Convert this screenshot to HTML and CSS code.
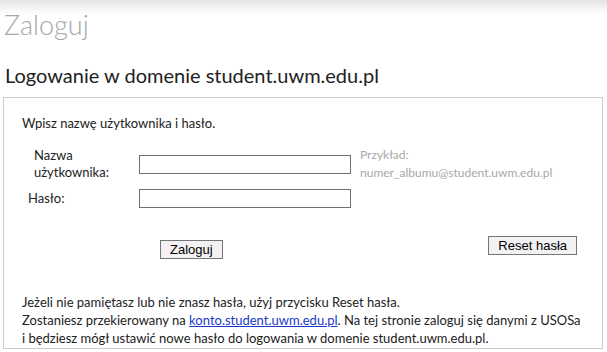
FILE: index.html
```html
<!DOCTYPE html>
<html lang="pl">
<head>
  <meta charset="UTF-8">
  <meta name="viewport" content="width=device-width, initial-scale=1.0">
  <title>Zaloguj</title>
  <link rel="stylesheet" href="styles.css">
</head>
<body>
  <h1 class="page-title">Zaloguj</h1>
  <h2 class="domain-title">Logowanie w domenie student.uwm.edu.pl</h2>

  <div class="login-box">
    <p class="intro">Wpisz nazwę użytkownika i hasło.</p>
    <form id="loginForm">
      <div class="fields">
        <label class="field-label label-user" for="username">Nazwa<br>użytkownika:</label>
        <input type="text" id="username" class="field-input">
        <div class="hint">Przykład:<br>numer_albumu@student.uwm.edu.pl</div>

        <label class="field-label" for="password">Hasło:</label>
        <input type="password" id="password" class="field-input">
        <div></div>
      </div>
      <div class="actions">
        <button type="submit" class="login-btn">Zaloguj</button>
        <button type="button" class="reset-btn">Reset hasła</button>
      </div>
    </form>
    <p class="note">
      Jeżeli nie pamiętasz lub nie znasz hasła, użyj przycisku Reset hasła.<br>
      Zostaniesz przekierowany na <a href="#">konto.student.uwm.edu.pl</a>. Na tej stronie zaloguj się danymi z USOSa<br>
      i będziesz mógł ustawić nowe hasło do logowania w domenie student.uwm.edu.pl.
    </p>
  </div>
</body>
</html>
```

FILE: styles.css
```css
body {
  font-family: Lato, "Open Sans", sans-serif;
  color: #222;
  background: #fff linear-gradient(#e4e4e4, #fff 14px) no-repeat;
  margin: 0;
  padding: 0;
}
.page-title {
  font-size: 27px;
  font-weight: 300;
  line-height: 40px;
  color: #a8a8a8;
  margin: 5px 0 0 4px;
}
.domain-title {
  font-size: 20px;
  font-weight: normal;
  line-height: 24px;
  margin: 18px 0 10px 5px;
}
.login-box {
  margin: 0 4px 3px 3px;
  padding: 16px 18px 1px;
  border: 1px solid #cccccc;
  font-size: 13px;
}
.intro {
  line-height: 18px;
  margin: 0;
}
.fields {
  display: grid;
  grid-template-columns: 102px 212px 1fr;
  column-gap: 9px;
  row-gap: 7px;
  align-items: center;
  margin: 14px 0 0 6px;
  line-height: 17px;
}
.label-user {
  padding-left: 6px;
}
.field-input {
  height: 19px;
  box-sizing: border-box;
  border: 1px solid #707070;
  padding: 0 3px;
  margin: 0;
}
.hint {
  font-size: 12px;
  color: #a8a8a8;
  line-height: 18px;
}
.actions {
  display: flex;
  justify-content: space-between;
  align-items: flex-start;
  margin-top: 28px;
  padding: 0 7px 0 138px;
}
.actions button {
  font-family: "Liberation Sans", Arial, sans-serif;
  font-size: 13px;
  line-height: 15px;
  color: #000;
  background-color: #f3f1f3;
  border: 1px solid #767676;
  padding: 1px 9px;
  cursor: pointer;
}
.login-btn {
  margin-top: 4px;
}
.reset-btn {
  padding: 0 6px;
}
.note {
  line-height: 18px;
  margin: 34px 0 0;
}
.note a {
  color: #1a3acb;
}
```
